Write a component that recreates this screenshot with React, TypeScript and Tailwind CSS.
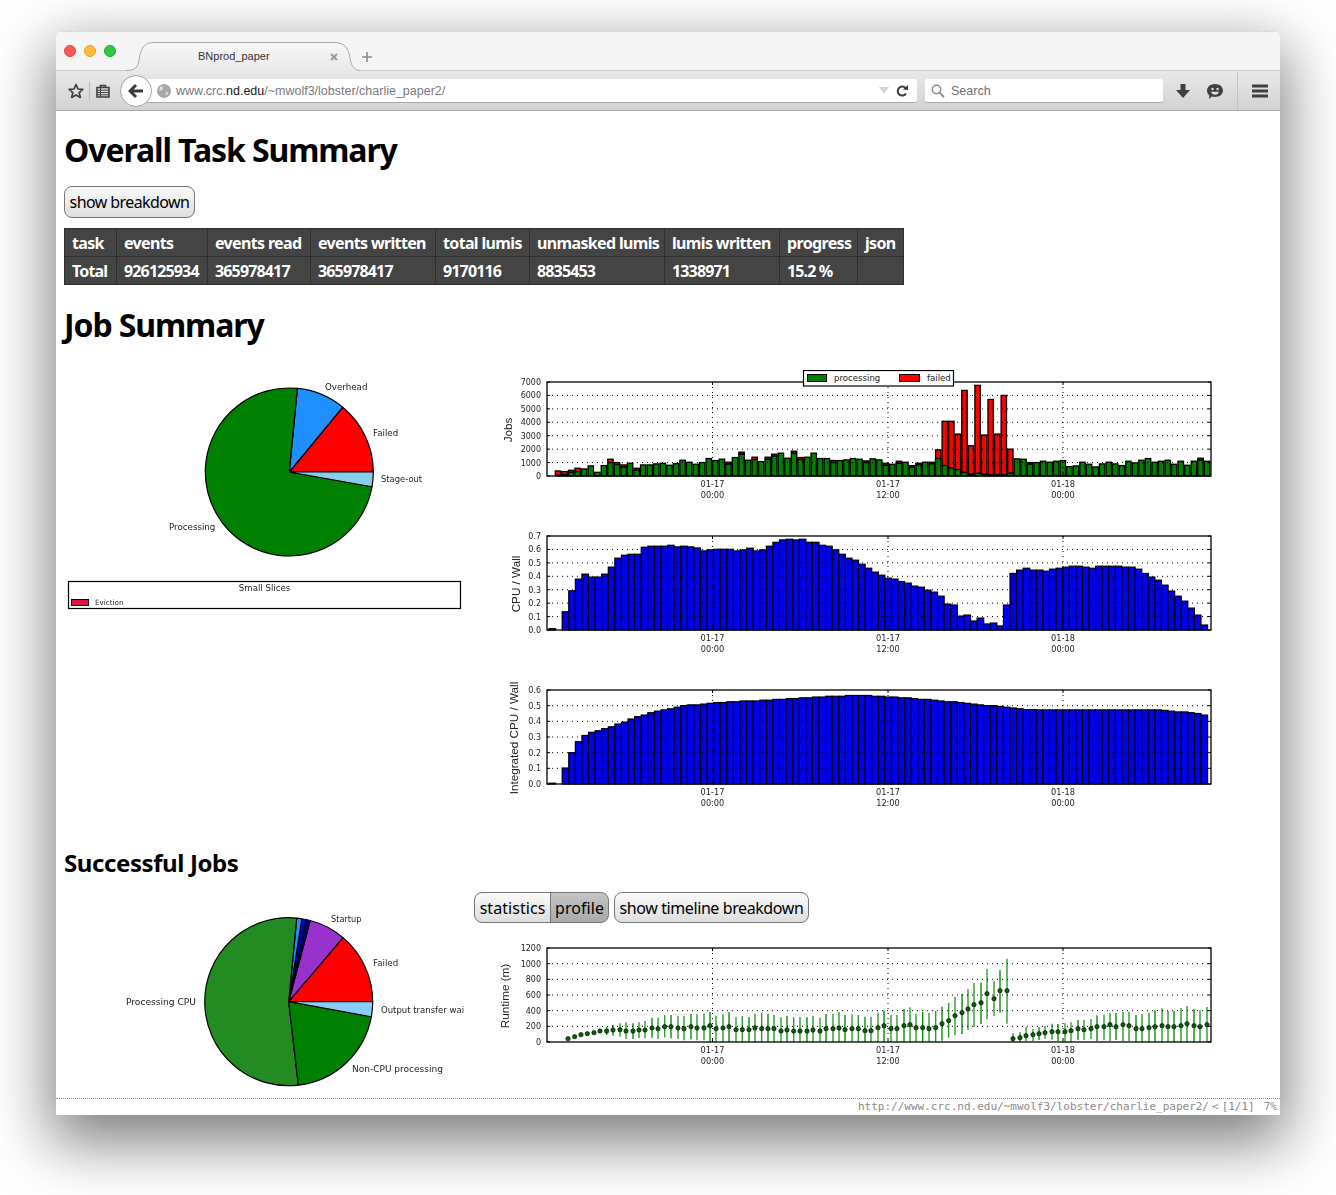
import React from "react";

const T: [number, number?][] = [
  [375, 50],[325, 100],[425, 275],[575, 325],[525],[750],[275],[775],[1250, 1000],[1000, 850],[825, 650],[950],[575, 425],[825],[825],[900],[950],[800],[925],[1175],[1025],[875],[1000],[1300],[1150],[1250],[1025, 875],[1375],[1775, 1625],[1175],[1400, 1225],[1075],[1400, 1250],[1625, 1475],[1700],[1325],[1850, 1700],[1375, 1225],[1400],[1700],[1300],[1300],[1150, 1000],[1150],[1200],[1300],[1250],
  [1125, 1000],[1275],[1200],[950, 800],[875],[1100, 950],[1025],[775, 650],[950, 825],[1025],[1025, 900],[1950, 1300],[4075, 775],[4075, 575],[3125, 475],[6375, 275],[2250, 125],[6750, 200],[3050, 125],[5700, 75],[3125, 75],[6000, 75],[2000, 200],[1275],[1250],[1000, 875],[1000],[1100],[1025],[1100],[1150],[700],[750],[1025],[875],[675],[900],[1025],[900],[775],[1100],[975],[1175],[1300],[1025],[1100],[1175],[875],[1100],[800],[1100],[1325, 1175],[1100],
];
const C2 = [.01,0,.136,.292,.379,.416,.394,.394,.416,.468,.535,.557,.564,.564,.616,.624,.624,.624,.631,.619,.624,.619,.611,.589,.597,.601,.601,.601,.589,.597,.609,.589,.597,.624,.653,.671,.676,.671,.676,.653,.653,.631,.624,.597,.564,.535,.52,
  .49,.46,.431,.408,.386,.379,.361,.349,.327,.319,.297,.282,.252,.193,.186,.104,.111,.067,.089,.045,.052,.03,.186,.421,.446,.46,.446,.446,.438,.453,.46,.468,.475,.475,.468,.46,.475,.475,.475,.475,.468,.468,.453,.421,.394,.371,.334,.29,.252,.215,.163,.111,.037];
const C3 = [.005,0,.102,.2,.27,.31,.33,.34,.353,.365,.383,.395,.415,.43,.44,.455,.465,.473,.48,.49,.5,.505,.505,.51,.515,.52,.52,.525,.525,.53,.53,.53,.535,.535,.54,.54,.545,.545,.55,.55,.555,.555,.56,.56,.56,.565,.565,.565,.565,.56,
  .56,.555,.555,.55,.55,.545,.54,.54,.535,.53,.525,.525,.52,.515,.51,.505,.5,.5,.495,.49,.485,.48,.475,.475,.473,.473,.473,.473,.473,.473,.473,.473,.473,.473,.473,.473,.473,.473,.473,.473,.473,.473,.473,.47,.465,.46,.46,.455,.45,.44];
// [x zoom, median y zoom, high y zoom, low y zoom]
const R1: number[][] = [[234,311],[254,305],[273,299],[292,296],[312,293],[330,288],[350,288,275,300],[369,285,270,302],[390,284,265,305],[408,288,262,312],[429,288,265,312],[447,285,262,310],[465,285,258,310],[486,279,248,308],[504,281,248,312],[524,275,240,307],[543,275,240,310],[564,279,243,312],[582,281,243,316],[603,275,237,313],[621,279,238,316],[642,279,235,316],[660,272,231,321],[678,281,242,321],[699,279,238,321],[717,275,232,321],[738,284,246,321],[757,284,243,321],[777,284,246,321],[795,279,236,321],[815,281,233,321],[834,281,236,321],[852,281,240,321],[873,288,247,321],[891,285,243,321],[911,288,247,321],[930,288,246,321],[951,288,247,321],[969,285,243,321],[990,288,248,321],[1008,281,237,321],[1029,281,236,321],[1047,279,231,321],[1065,284,240,321],[1086,281,238,321],[1105,281,240,321]];
const R2: number[][] = [[15,287,245,321],[33,287,245,321],[54,278,233,321],[72,272,226,321],[93,281,240,321],[111,281,240,321],[132,272,222,321],[150,269,217,321],[168,278,236,321],[188,278,231,321],[207,281,234,321],[227,278,228,321],[246,266,215,317],[266,257,204,308],[285,242,186,300],[306,233,177,297],[324,222,162,285],[342,209,144,276],[363,203,143,267],[381,176,102,252],[402,191,137,243],[420,167,105,233],[441,167,71,266],[459,311,295,321],[480,308,292,321],[498,302,275,318],[519,299,282,318],[537,296,277,315],[555,293,273,311],[576,290,266,314],[594,290,267,318],[615,290,265,321],[633,287,262,321],[654,281,255,315],[672,284,255,315],[693,281,252,312],[711,275,241,318],[732,275,239,316],[750,269,234,318],[768,275,234,315],[789,269,231,318],[807,272,230,318],[828,281,240,321],[846,281,238,321],[867,278,233,321],[885,275,226,321],[906,272,220,321],[924,275,228,321],[942,275,228,321],[963,272,219,321],[981,266,213,321],[1002,272,222,321],[1020,275,225,321],[1041,269,216,321]];
const RUN = [
  ...R1.map(([x, m, h, l]) => ({ x: 490 + x / 3, m: 935 + m / 3, h: h ? 935 + h / 3 : 0, l: l ? 935 + l / 3 : 0 })),
  ...R2.map(([x, m, h, l]) => ({ x: 860 + x / 3, m: 935 + m / 3, h: 935 + h / 3, l: 935 + l / 3 })),
];

const DV = "'DejaVu Sans', sans-serif";
const LS = "'Liberation Sans', sans-serif";

function Frame({ top, ticks, ylabel, ylx, yly }: { top: number; ticks: string[]; ylabel: string; ylx: number; yly: number }) {
  const h = 94;
  const n = ticks.length - 1;
  const xs: [number, string, string][] = [[712.5, "01-17", "00:00"], [888, "01-17", "12:00"], [1063, "01-18", "00:00"]];
  return (
    <g>
      {ticks.map((t, i) => {
        const y = top + h - (i * h) / n;
        return (
          <g key={i}>
            {i > 0 && i < n && <line x1={547} x2={1211} y1={y} y2={y} stroke="#000" strokeWidth={1} strokeDasharray="1 4" />}
            <line x1={547} x2={550} y1={y} y2={y} stroke="#000" />
            <line x1={1208} x2={1211} y1={y} y2={y} stroke="#000" />
            <text x={541} y={y + 3} textAnchor="end" fontSize={8} fontFamily={DV} fill="#222">{t}</text>
          </g>
        );
      })}
      {xs.map(([x, a, b]) => (
        <g key={x}>
          <line x1={x} x2={x} y1={top} y2={top + h} stroke="#000" strokeWidth={1} strokeDasharray="1 4" />
          <line x1={x} x2={x} y1={top} y2={top + 3} stroke="#000" />
          <line x1={x} x2={x} y1={top + h - 3} y2={top + h} stroke="#000" />
          <text x={x} y={top + h + 11} textAnchor="middle" fontSize={8.2} fontFamily={DV} fill="#222">{a}</text>
          <text x={x} y={top + h + 22} textAnchor="middle" fontSize={8.2} fontFamily={DV} fill="#222">{b}</text>
        </g>
      ))}
      <rect x={547} y={top} width={664} height={h} fill="none" stroke="#000" strokeWidth={1.3} />
      <text transform={`translate(${ylx} ${yly}) rotate(-90)`} textAnchor="middle" fontSize={11.7} fontFamily={LS} fill="#222">{ylabel}</text>
    </g>
  );
}

function JobsChart() {
  const y = (v: number) => 476 - (v * 94) / 7000;
  return (
    <svg width={730} height={154} viewBox="490 370 730 154" className="block blur-[0.2px]">
      {T.map(([t, g], i) => {
        const cx = 558 + i * 6.556;
        const gr = g ?? t;
        return (
          <g key={i} stroke="#000" strokeWidth={1.3}>
            {g !== undefined && <rect x={cx - 2.7} y={y(t)} width={5.4} height={y(g) - y(t)} fill="#ff0000" />}
            <rect x={cx - 2.7} y={y(gr)} width={5.4} height={476 - y(gr)} fill="#008000" />
          </g>
        );
      })}
      <Frame top={382} ticks={["0", "1000", "2000", "3000", "4000", "5000", "6000", "7000"]} ylabel="Jobs" ylx={512} yly={430} />
      <rect x={803.5} y={370.5} width={150} height={15.5} fill="#fff" stroke="#000" strokeWidth={1.2} />
      <rect x={807.5} y={374.5} width={19} height={7} fill="#008000" stroke="#000" />
      <text x={834} y={381} fontSize={8.6} fontFamily={DV} fill="#222">processing</text>
      <rect x={899.5} y={374.5} width={20} height={7} fill="#ff0000" stroke="#000" />
      <text x={927} y={381} fontSize={8.6} fontFamily={DV} fill="#222">failed</text>
    </svg>
  );
}

function BlueChart({ data, top, max, ticks, ylabel, ylx, yly }: { data: number[]; top: number; max: number; ticks: string[]; ylabel: string; ylx: number; yly: number }) {
  const base = top + 94;
  const step = (1204.3 - 552.3) / (data.length - 1);
  return (
    <svg width={730} height={154} viewBox={`490 ${top - 12} 730 154`} className="block blur-[0.2px]">
      {data.map((v, i) => {
        const h = (v * 94) / max;
        return <rect key={i} x={552.3 + i * step - step / 2} y={base - h} width={step} height={h} fill="#0000f0" stroke="#000" strokeWidth={1.2} />;
      })}
      <Frame top={top} ticks={ticks} ylabel={ylabel} ylx={ylx} yly={yly} />
    </svg>
  );
}

function RuntimeChart() {
  return (
    <svg width={730} height={140} viewBox="490 935 730 140" className="block blur-[0.2px]">
      {RUN.map((p, i) => p.h ? <line key={i} x1={p.x} x2={p.x} y1={p.h} y2={p.l} stroke={i % 3 === 1 ? "#0a8a0a" : "#2e9a2e"} strokeWidth={1.4} /> : null)}
      <Frame top={948} ticks={["0", "200", "400", "600", "800", "1000", "1200"]} ylabel="Runtime (m)" ylx={509} yly={996} />
      {RUN.map((p, i) => <circle key={i} cx={p.x} cy={p.m} r={2.2} fill="#006400" stroke="#000" strokeWidth={0.6} />)}
    </svg>
  );
}

function slice(cx: number, cy: number, r: number, a: number, b: number) {
  const p = (d: number) => `${cx + r * Math.cos((d * Math.PI) / 180)} ${cy - r * Math.sin((d * Math.PI) / 180)}`;
  return `M${cx} ${cy} L${p(a)} A${r} ${r} 0 ${b - a > 180 ? 1 : 0} 0 ${p(b)} Z`;
}

function Pie({ cx, cy, parts }: { cx: number; cy: number; parts: [number, number, string][] }) {
  return <g>{parts.map(([a, b, c]) => <path key={a} d={slice(cx, cy, 84, a, b)} fill={c} stroke="#000" strokeWidth={1.2} strokeLinejoin="round" />)}</g>;
}

function Label({ x, y, children, size = 8.7 }: { x: number; y: number; children: React.ReactNode; size?: number }) {
  return <text x={x} y={y} fontSize={size} fontFamily={DV} fill="#222">{children}</text>;
}

function Pie1() {
  return (
    <svg width={410} height={250} viewBox="64 370 410 250" className="block shrink-0 blur-[0.2px]">
      <Pie cx={289.3} cy={472} parts={[[0, 50.5, "#ff0000"], [50.5, 84.5, "#1e90ff"], [84.5, 349.9, "#008000"], [349.9, 360, "#87ceeb"]]} />
      <Label x={325} y={390}>Overhead</Label>
      <Label x={373} y={436}>Failed</Label>
      <Label x={381} y={482} size={8.4}>Stage-out</Label>
      <Label x={169} y={530}>Processing</Label>
      <rect x={68.5} y={581.5} width={392} height={27} fill="#fff" stroke="#000" strokeWidth={1.2} />
      <text x={264.5} y={591} textAnchor="middle" fontSize={8.6} fontFamily={DV} fill="#222">Small Slices</text>
      <rect x={71.5} y={599.5} width={17} height={6} fill="#dc143c" stroke="#000" />
      <Label x={95} y={605} size={7.2}>Eviction</Label>
    </svg>
  );
}

function Pie2() {
  return (
    <svg width={410} height={210} viewBox="64 885 410 210" className="block shrink-0 blur-[0.2px]">
      <Pie cx={288.7} cy={1001.7} parts={[[0, 49.7, "#ff0000"], [49.7, 75.2, "#9932cc"], [75.2, 78, "#000080"], [78, 81, "#0000cd"], [81, 84.5, "#1e90ff"], [84.5, 276.6, "#228b22"], [276.6, 349.7, "#008000"], [349.7, 360, "#87cefa"]]} />
      <Label x={331} y={922} size={8.2}>Startup</Label>
      <Label x={373} y={966}>Failed</Label>
      <Label x={381} y={1013} size={8.5}>Output transfer wai</Label>
      <Label x={126} y={1005} size={9.1}>Processing CPU</Label>
      <Label x={352} y={1072} size={9}>Non-CPU processing</Label>
    </svg>
  );
}

const btn = "whitespace-nowrap border border-[#777] bg-gradient-to-b from-[#fafafa] to-[#dedede] text-black text-[16px] leading-none px-[4px]";
const btnDark = "whitespace-nowrap border border-[#777] bg-gradient-to-b from-[#c4c4c4] to-[#aaaaaa] text-black text-[16px] leading-none px-[4px]";

const HEAD = ["task", "events", "events read", "events written", "total lumis", "unmasked lumis", "lumis written", "progress", "json"];
const ROW = ["Total", "926125934", "365978417", "365978417", "9170116", "8835453", "1338971", "15.2 %", ""];
const WIDTHS = ["w-[52px]", "w-[91px]", "w-[103px]", "w-[125px]", "w-[94px]", "w-[135px]", "w-[115px]", "w-[78px]", "w-[46px]"];

export default function App() {
  return (
    <div className="h-[1195px] w-[1336px] overflow-hidden bg-white pl-[56px] pt-[31px]" style={{ fontFamily: "'Noto Sans', sans-serif" }}>
      <div className="flex h-[1084px] w-[1224px] flex-col overflow-hidden rounded-t-[6px] bg-white shadow-[0_22px_60px_6px_rgba(0,0,0,0.5)]">
        {/* Tab strip */}
        <div className="flex h-[40px] shrink-0 items-stretch border-b border-t border-b-[#c8c8c8] border-t-[#dcdcdc] bg-[#f5f5f5]">
          <div className="ml-[8px] flex items-center gap-[8px]">
            <span className="h-[12px] w-[12px] rounded-full border border-[#e0443e] bg-[#fc5753]" />
            <span className="h-[12px] w-[12px] rounded-full border border-[#dea123] bg-[#fdbc40]" />
            <span className="h-[12px] w-[12px] rounded-full border border-[#1aab29] bg-[#33c748]" />
          </div>
          <div className="relative z-10 -mb-px ml-[10px] mt-[10px] flex h-[29px] w-[234px] items-center">
            <svg className="absolute inset-0" width={234} height={29} viewBox="0 0 234 29">
              <defs>
                <linearGradient id="tabg" x1="0" x2="0" y1="0" y2="1">
                  <stop offset="0" stopColor="#f8f8f8" />
                  <stop offset="1" stopColor="#e9e9e9" />
                </linearGradient>
              </defs>
              <path d="M0 28.5C9 28.5 12 25 13 18C15 6 18 .5 28 .5L209 .5C219 .5 223 8 224 16C225 24 229 28.5 234 28.5V29H0Z" fill="url(#tabg)" />
              <path d="M0 28.5C9 28.5 12 25 13 18C15 6 18 .5 28 .5L209 .5C219 .5 223 8 224 16C225 24 229 28.5 234 28.5" fill="none" stroke="#a8a8a8" />
            </svg>
            <span className="relative ml-[72px] text-[11px] text-[#333]" style={{ fontFamily: "'Liberation Sans', sans-serif" }}>BNprod_paper</span>
            <svg className="absolute left-[204px] top-[11px]" width={8} height={8} viewBox="0 0 8 8"><path d="M1 1L7 7M7 1L1 7" stroke="#9a9a9a" strokeWidth={2} /></svg>
          </div>
          <div className="ml-[1px] flex items-center pt-[12px]">
            <svg width={12} height={12} viewBox="0 0 12 12"><path d="M6 1V11M1 6H11" stroke="#8a8a8a" strokeWidth={1.6} /></svg>
          </div>
        </div>
        {/* Toolbar */}
        <div className="flex h-[40px] shrink-0 items-center border-b border-[#a8a8a8] bg-gradient-to-b from-[#e9e9e9] to-[#d2d2d2] pl-[12px] pt-[1px]" style={{ fontFamily: "'Liberation Sans', sans-serif" }}>
          <svg width={16} height={16} viewBox="0 0 16 16"><path d="M8 1.500L10 6L14.800 6.400L11.200 9.600L12.300 14.400L8 11.900L3.700 14.400L4.800 9.600L1.200 6.400L6 6Z" fill="none" stroke="#3f3f3f" strokeWidth={1.7} strokeLinejoin="round" /></svg>
          <span className="ml-[5px] h-[20px] w-px bg-[#bdbdbd]" />
          <svg className="ml-[6px]" width={14} height={14} viewBox="0 0 14 14"><path d="M1 3.500H13V13H1Z M4.500 3.500V1.500H9.500V3.500" fill="none" stroke="#3f3f3f" strokeWidth={1.6} /><path d="M1 6.200H13M1 8.500H13M1 10.800H13M4.500 4V13" stroke="#3f3f3f" strokeWidth={1} /></svg>
          <div className="relative z-10 ml-[10px] flex h-[32px] w-[32px] items-center justify-center rounded-full border border-[#a3a3a3] bg-white">
            <svg width={16} height={16} viewBox="0 0 16 16"><path d="M8 2L2 8L8 14M2.500 8H15" fill="none" stroke="#3a3a3a" strokeWidth={3} /></svg>
          </div>
          <div className="-ml-[12px] flex h-[24px] w-[777px] items-center rounded-[3px] border-b border-[#a9a9a9] bg-white pl-[17px] pr-[8px]">
            <svg width={14} height={14} viewBox="0 0 14 14"><circle cx={7} cy={7} r={7} fill="#a8a8a8" /><path d="M3 3C5 2 7 3 6 5C5 7 3 6 2 7M9 8C11 7 12 9 10 11C9 12 8 10 9 8Z" fill="#dcdcdc" /></svg>
            <span className="ml-[5px] flex-1 pt-[1px] text-[12.5px] text-[#7a7a7a]">www.crc.<span className="text-[#1a1a1a]">nd.edu</span>/~mwolf3/lobster/charlie_paper2/</span>
            <svg width={10} height={7} viewBox="0 0 10 7"><path d="M0 0H10L5 7Z" fill="#d4d4d4" /></svg>
            <svg className="ml-[6px]" width={14} height={14} viewBox="0 0 14 14"><path d="M11 9.500A4.500 4.500 0 1 1 10.500 4" fill="none" stroke="#3a3a3a" strokeWidth={2} /><path d="M8 5.500L13 6V1Z" fill="#3a3a3a" /></svg>
          </div>
          <div className="ml-[8px] flex h-[24px] w-[238px] items-center rounded-[3px] border-b border-[#a9a9a9] bg-white pl-[6px]">
            <svg width={14} height={14} viewBox="0 0 14 14"><circle cx={5.500} cy={5.500} r={4.200} fill="none" stroke="#8a8a8a" strokeWidth={1.5} /><path d="M8.600 8.600L13 13" stroke="#8a8a8a" strokeWidth={2} /></svg>
            <span className="ml-[6px] pt-[1px] text-[12.5px] text-[#6e6e6e]">Search</span>
          </div>
          <svg className="ml-[13px]" width={14} height={14} viewBox="0 0 14 14"><path d="M4.500 0H9.500V6H14L7 14L0 6H4.500Z" fill="#3f3f3f" /></svg>
          <svg className="ml-[17px]" width={16} height={15} viewBox="0 0 16 15"><path d="M8 0C12.400 0 16 2.800 16 6.500S12.400 13 8 13C7 13 6 12.900 5 12.600L2 15L2.400 11.500C.9 10.300 0 8.500 0 6.500C0 2.800 3.600 0 8 0Z" fill="#3f3f3f" /><circle cx={5.500} cy={5} r={1.200} fill="#ddd" /><circle cx={10.500} cy={5} r={1.200} fill="#ddd" /><path d="M4 7.800H12C11.500 9.800 10 10.800 8 10.800S4.500 9.800 4 7.800Z" fill="#ddd" /></svg>
          <span className="ml-[14px] h-[38px] w-px bg-[#c4c4c4]" />
          <svg className="ml-[14px]" width={16} height={14} viewBox="0 0 16 14"><path d="M0 2H16M0 7H16M0 12H16" stroke="#3f3f3f" strokeWidth={3} /></svg>
        </div>
        {/* Page */}
        <main className="flex flex-1 flex-col pl-[8px] text-black">
          <h1 className="mt-[19px] h-[40px] text-[32px] font-bold leading-[40px] tracking-[-1.1px]">Overall Task Summary</h1>
          <button className={`${btn} mt-[16px] h-[32px] w-[131px] rounded-[8px] tracking-[-0.58px]`}>show breakdown</button>
          <table className="mt-[10px] w-[839px] table-fixed border-collapse whitespace-nowrap bg-[#444] text-[16px] font-bold text-white">
            <thead>
              <tr className="h-[28px]">
                {HEAD.map((h, i) => <th key={h} className={`${WIDTHS[i]} border border-[#2f2f2f] pl-[7px] pt-[1px] text-left font-bold tracking-[-0.65px]`}>{h}</th>)}
              </tr>
            </thead>
            <tbody>
              <tr className="h-[28px]">
                {ROW.map((c, i) => <td key={i} className="border border-[#2f2f2f] pl-[7px] text-left tracking-[-0.85px]">{c}</td>)}
              </tr>
            </tbody>
          </table>
          <h1 className="mt-[20px] h-[40px] text-[32px] font-bold leading-[40px] tracking-[-1.1px]">Job Summary</h1>
          <div className="mt-[25px] flex">
            <Pie1 />
            <div className="ml-[16px] flex flex-col">
              <JobsChart />
              <BlueChart data={C2} top={536} max={0.7} ticks={["0.0", "0.1", "0.2", "0.3", "0.4", "0.5", "0.6", "0.7"]} ylabel="CPU / Wall" ylx={520} yly={584} />
              <BlueChart data={C3} top={690} max={0.6} ticks={["0.0", "0.1", "0.2", "0.3", "0.4", "0.5", "0.6"]} ylabel="Integrated CPU / Wall" ylx={518} yly={738} />
            </div>
          </div>
          <h2 className="mt-[16px] h-[30px] text-[24px] font-bold leading-[30px] tracking-[-0.4px]">Successful Jobs</h2>
          <div className="mt-[7px] flex h-[210px]">
            <Pie2 />
            <div className="flex flex-col pt-[7px]">
              <div className="flex">
                <button className={`${btn} h-[31px] w-[77px] rounded-l-[8px] tracking-[0.05px]`}>statistics</button>
                <button className={`${btnDark} -ml-px h-[31px] w-[59px] rounded-r-[8px] tracking-[0.05px]`}>profile</button>
                <button className={`${btn} ml-[5px] h-[31px] w-[195px] rounded-[8px] tracking-[-0.41px]`}>show timeline breakdown</button>
              </div>
              <div className="ml-[16px] mt-[12px]"><RuntimeChart /></div>
            </div>
          </div>
        </main>
        {/* Status bar */}
        <div className="flex h-[17px] shrink-0 items-center justify-end border-t border-dotted border-[#888] pr-[3px] pt-[1px] text-[11px] text-[#8a8a8a]" style={{ fontFamily: "'DejaVu Sans Mono', monospace" }}>
          <span>http://www.crc.nd.edu/~mwolf3/lobster/charlie_paper2/</span>
          <span className="ml-[3px]">&lt;</span>
          <span className="ml-[3px]">[1/1]</span>
          <span className="ml-[9px]">7%</span>
        </div>
      </div>
    </div>
  );
}
